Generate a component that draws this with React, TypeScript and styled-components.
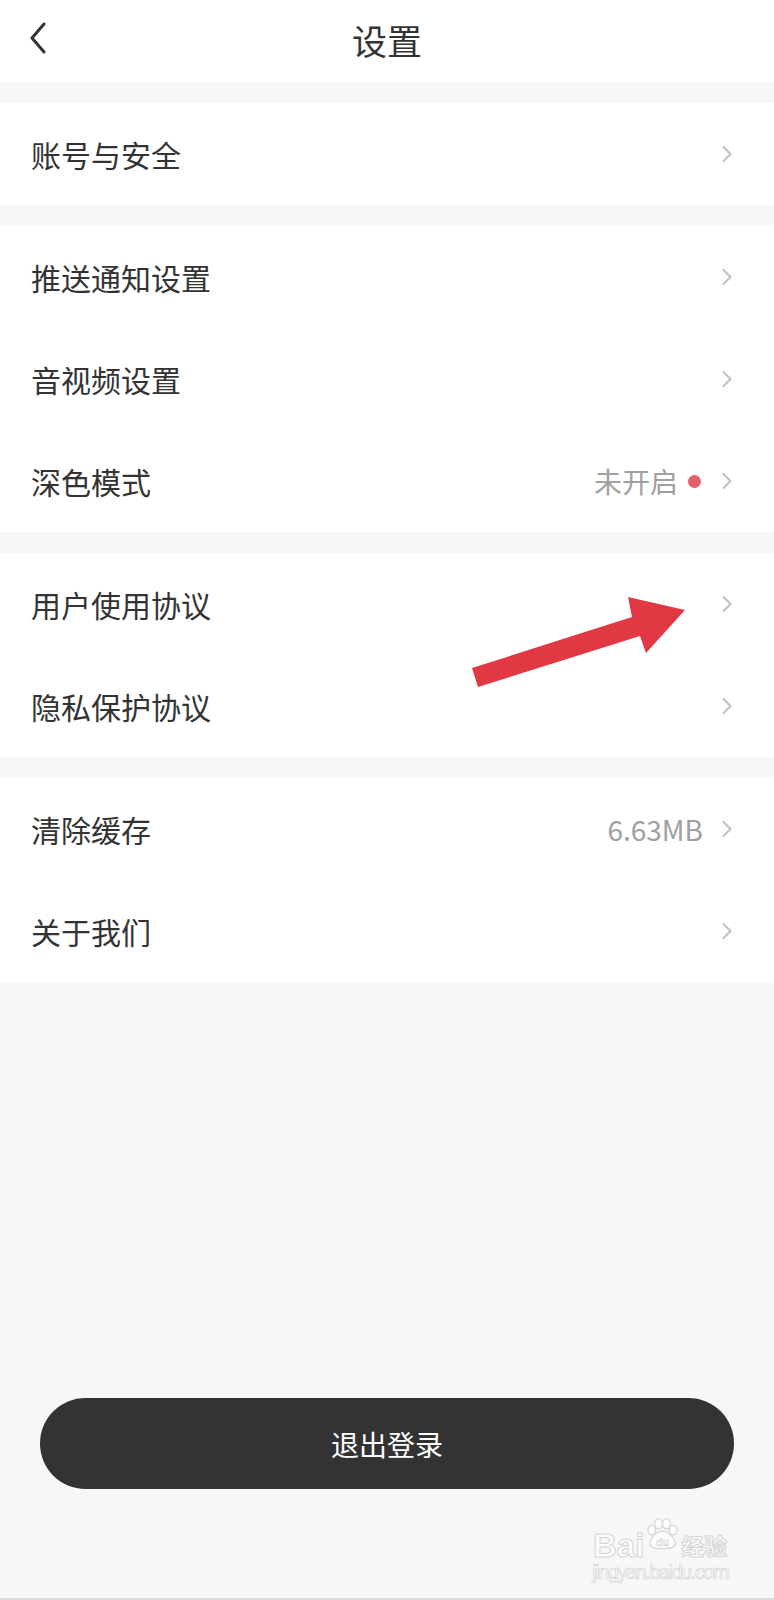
import React from "react";
import styled, { createGlobalStyle } from "styled-components";

const GlobalStyle = createGlobalStyle`
  html, body {
    margin: 0;
    padding: 0;
    background: #f7f7f7;
  }
  body {
    font-family: "Noto Sans CJK SC", "Noto Sans", sans-serif;
    color: #333;
  }
`;

type Item = {
  label: string;
  value?: string;
  dot?: boolean;
};

const GROUPS: Item[][] = [
  [{ label: "账号与安全" }],
  [
    { label: "推送通知设置" },
    { label: "音视频设置" },
    { label: "深色模式", value: "未开启", dot: true },
  ],
  [{ label: "用户使用协议" }, { label: "隐私保护协议" }],
  [{ label: "清除缓存", value: "6.63MB" }, { label: "关于我们" }],
];

const Chevron = () => (
  <ChevronIcon viewBox="0 0 12 18" width="12" height="18">
    <polyline
      points="2.5,2 9.5,9 2.5,16"
      fill="none"
      stroke="#c2c2c2"
      strokeWidth="2.2"
      strokeLinecap="round"
      strokeLinejoin="round"
    />
  </ChevronIcon>
);

const BackIcon = () => (
  <svg viewBox="0 0 18 32" width="18" height="32">
    <polyline
      points="15,2 3,16 15,30"
      fill="none"
      stroke="#333"
      strokeWidth="3"
      strokeLinecap="round"
      strokeLinejoin="round"
    />
  </svg>
);

const Paw = () => (
  <PawIcon viewBox="0 0 34 32" width="33" height="32">
    <g fill="#fdfdfd" stroke="#d6d6d6" strokeWidth="1.3">
      <ellipse cx="6" cy="12" rx="4" ry="5" />
      <ellipse cx="13" cy="5.5" rx="4" ry="5" />
      <ellipse cx="21" cy="5.5" rx="4" ry="5" />
      <ellipse cx="28" cy="12" rx="4" ry="5" />
      <path d="M17 13 C10 13 4 22 4 26 C4 30 9 31 17 31 C25 31 30 30 30 26 C30 22 24 13 17 13 Z" />
    </g>
    <text
      x="17"
      y="28"
      textAnchor="middle"
      fontSize="11"
      fontWeight="700"
      fontFamily="Liberation Sans, sans-serif"
      fill="#fdfdfd"
      stroke="#d0d0d0"
      strokeWidth="0.6"
    >
      du
    </text>
  </PawIcon>
);

export default function App() {
  return (
    <Page>
      <GlobalStyle />
      <Header>
        <BackButton>
          <BackIcon />
        </BackButton>
        <Title>设置</Title>
      </Header>

      <Groups>
        {GROUPS.map((group, gi) => (
          <Card key={gi}>
            {group.map((item) => (
              <Row key={item.label}>
                <Label>{item.label}</Label>
                <Trail>
                  {item.value && <Value>{item.value}</Value>}
                  {item.dot && <Dot />}
                  <Chevron />
                </Trail>
              </Row>
            ))}
          </Card>
        ))}
      </Groups>

      <Spacer />

      <Footer>
        <LogoutButton>退出登录</LogoutButton>
      </Footer>

      <WatermarkRow>
        <Watermark>
          <BrandLine>
            <BrandText>Bai</BrandText>
            <Paw />
            <BrandCn>经验</BrandCn>
          </BrandLine>
          <BrandUrl>jingyan.baidu.com</BrandUrl>
        </Watermark>
      </WatermarkRow>

      <Annotation viewBox="0 0 240 110" width="240" height="110">
        <polygon
          points="12,78 172,27 168,7 225,20 186,63 180,46 18,97"
          fill="#e23844"
        />
      </Annotation>
    </Page>
  );
}

const Page = styled.div`
  position: relative;
  min-height: 1600px;
  box-sizing: border-box;
  display: flex;
  flex-direction: column;
  background: #f7f7f7;
  border-bottom: 2px solid #dcdcdc;
`;

const Header = styled.header`
  position: relative;
  height: 82px;
  display: flex;
  align-items: center;
  justify-content: center;
  background: #fff;
`;

const BackButton = styled.div`
  position: absolute;
  left: 29px;
  top: 22px;
  display: flex;
`;

const Title = styled.h1`
  margin: 0;
  font-size: 35px;
  font-weight: 400;
  color: #333;
  line-height: 1;
  padding-bottom: 4px;
`;

const Groups = styled.div`
  display: flex;
  flex-direction: column;
  gap: 21px;
  padding-top: 21px;
`;

const Card = styled.section`
  background: #fff;
  display: flex;
  flex-direction: column;
`;

const Row = styled.div`
  height: 102px;
  display: flex;
  align-items: center;
  justify-content: space-between;
  padding: 0 41px 0 31px;
`;

const Label = styled.span`
  font-size: 30px;
  color: #333;
  line-height: 1;
`;

const Trail = styled.div`
  display: flex;
  align-items: center;
`;

const Value = styled.span`
  font-size: 28px;
  color: #a0a0a0;
  line-height: 1;
  margin-right: 18px;
`;

const Dot = styled.span`
  width: 13px;
  height: 13px;
  border-radius: 50%;
  background: #e35f65;
  margin: 0 20px 0 -8px;
`;

const ChevronIcon = styled.svg`
  display: block;
`;

const Spacer = styled.div`
  flex: 1;
`;

const Footer = styled.div`
  padding: 0 40px;
`;

const LogoutButton = styled.button`
  display: block;
  width: 100%;
  height: 91px;
  border: none;
  border-radius: 46px;
  background: #333333;
  color: #fff;
  font-family: "Noto Sans CJK SC", "Noto Sans", sans-serif;
  font-size: 28px;
  padding: 0;
`;

const WatermarkRow = styled.div`
  height: 109px;
  display: flex;
  justify-content: flex-end;
  padding: 29px 46px 0 0;
  box-sizing: border-box;
`;

const Watermark = styled.div`
  display: flex;
  flex-direction: column;
  align-items: center;
`;

const BrandLine = styled.div`
  display: flex;
  align-items: flex-end;
  gap: 2px;
`;

const PawIcon = styled.svg`
  display: block;
  margin-bottom: 12px;
`;

const BrandText = styled.span`
  font-family: "Liberation Sans", sans-serif;
  font-size: 33px;
  font-weight: 700;
  line-height: 1;
  color: #fdfdfd;
  -webkit-text-stroke: 1px #d4d4d4;
`;

const BrandCn = styled.span`
  font-size: 23px;
  font-weight: 700;
  line-height: 1;
  color: #fdfdfd;
  -webkit-text-stroke: 1px #d4d4d4;
  margin-bottom: 5px;
`;

const BrandUrl = styled.span`
  font-family: "Liberation Sans", sans-serif;
  font-size: 20px;
  letter-spacing: -1.5px;
  line-height: 1;
  color: #fdfdfd;
  -webkit-text-stroke: 0.7px #d4d4d4;
`;

const Annotation = styled.svg`
  position: absolute;
  left: 460px;
  top: 590px;
  pointer-events: none;
`;
